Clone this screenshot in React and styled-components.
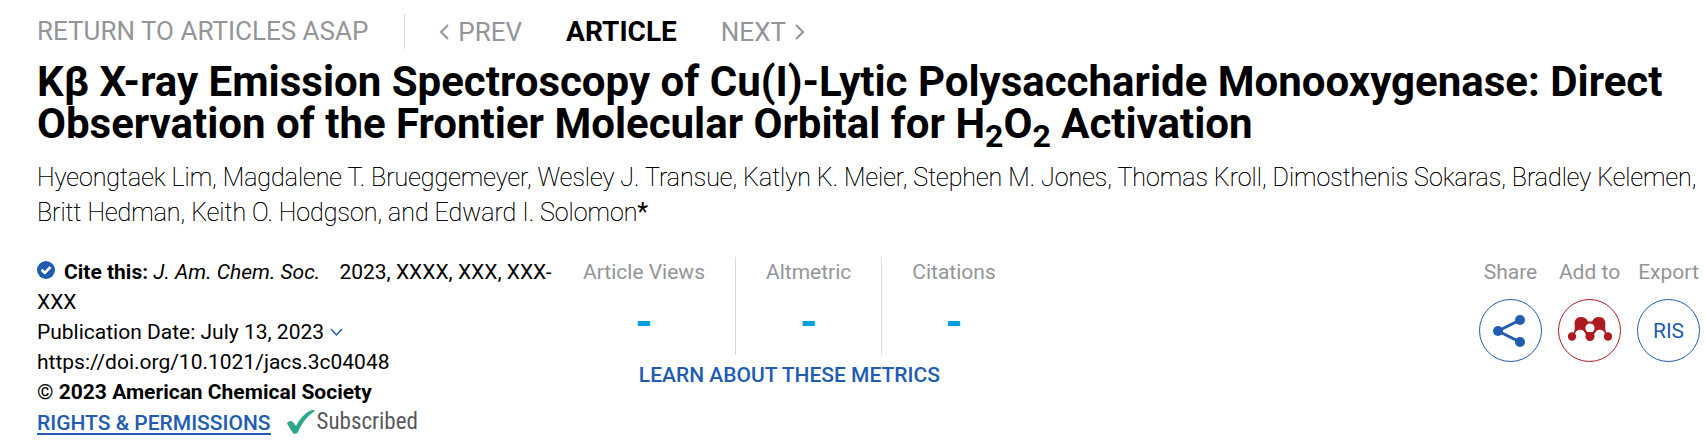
import React from "react";
import styled, { createGlobalStyle } from "styled-components";

const Global = createGlobalStyle`
  *, *::before, *::after { box-sizing: border-box; }
  body {
    margin: 0;
    background: #fff;
    color: #000;
    font-family: Roboto, "Liberation Sans", sans-serif;
    font-size: 21px;
    line-height: 30px;
  }
  a { color: inherit; text-decoration: none; }
  button { font: inherit; cursor: pointer; }
`;

const Page = styled.main`
  padding: 14px 0 9px 37px;
`;

const Nav = styled.nav`
  display: flex;
  align-items: center;
  height: 35px;
  font-size: 26px;
  color: #939598;
`;

const ReturnLink = styled.a`
  padding-right: 36px;
  border-right: 1px solid #d4dee2;
  line-height: 35px;
  margin-right: 34px;
`;

const Pager = styled.div`
  display: flex;
  align-items: center;
  gap: 44px;
`;

const PagerLink = styled.a`
  display: flex;
  align-items: center;
  gap: 9px;
`;

const Current = styled.span`
  font-size: 28px;
  font-weight: 700;
  color: #000;
`;

const Title = styled.h1`
  margin: 12px 0 0;
  font-size: 42px;
  line-height: 42px;
  font-weight: 700;

  sub {
    font-size: 32px;
    line-height: 0;
  }
`;

const Authors = styled.p`
  margin: 15px 0 0;
  font-size: 25px;
  line-height: 35px;
  font-weight: 140;
  text-shadow: 0 0 0 #000;

  span {
    font-weight: 400;
    text-shadow: none;
  }
`;

const Details = styled.div`
  display: flex;
  align-items: flex-start;
  margin-top: 27px;
  padding-right: 5px;
`;

const Citation = styled.section`
  width: 516px;
  flex: none;
`;

const Line = styled.div`
  strong { font-weight: 700; }
  .soc { margin-right: 14px; }
`;

const Badge = styled.svg`
  margin-right: 9px;
  vertical-align: 0;
`;

const DateButton = styled.button`
  display: flex;
  align-items: center;
  gap: 6px;
  padding: 0;
  border: 0;
  background: none;
  color: inherit;
`;

const Access = styled.div`
  display: flex;
  align-items: center;
  gap: 16px;
`;

const Rights = styled.a`
  margin-top: 4px;
  color: #205cb2;
  font-weight: 500;
  line-height: 20px;
  border-bottom: 2px solid #205cb2;
`;

const Subscribed = styled.span`
  display: flex;
  align-items: center;
  gap: 2px;
  color: #58595b;
  font-family: "Roboto Condensed", Roboto, sans-serif;
  font-size: 23px;
`;

const Metrics = styled.section`
  display: flex;
  flex-direction: column;
  align-items: center;
`;

const MetricRow = styled.div`
  display: flex;
`;

const Metric = styled.div`
  height: 98px;
  padding: 0 30px;
  text-align: center;
  color: #939598;

  & + & { border-left: 1px solid #d4dee2; }
`;

const Value = styled.div`
  margin-top: 14px;
  font-size: 44px;
  line-height: 42px;
  font-weight: 700;
  color: #00a0df;
`;

const Learn = styled.a`
  margin-top: 5px;
  color: #205cb2;
  font-weight: 500;
`;

const Actions = styled.section`
  display: flex;
  gap: 16px;
  margin-left: auto;
`;

const Action = styled.label`
  display: flex;
  flex-direction: column;
  align-items: center;
  width: 63px;
  gap: 12px;
  white-space: nowrap;
  color: #939598;
`;

const Round = styled.button`
  display: flex;
  align-items: center;
  justify-content: center;
  width: 63px;
  height: 63px;
  padding: 0;
  border: 1px solid currentColor;
  border-radius: 50%;
  background: #fff;
  color: ${(p) => p.$color || "#205cb2"};
`;

const Chevron = ({ points, width, height, color = "currentColor", weight = 2 }) => (
  <svg width={width} height={height} viewBox={`0 0 ${width} ${height}`} fill="none" stroke={color} strokeWidth={weight} aria-hidden="true">
    <polyline points={points} />
  </svg>
);

const metrics = ["Article Views", "Altmetric", "Citations"];

export default function App() {
  return (
    <>
      <Global />
      <Page>
        <Nav>
          <ReturnLink href="#asap">RETURN TO ARTICLES ASAP</ReturnLink>
          <Pager>
            <PagerLink href="#prev">
              <Chevron width={10} height={16} points="9,1 2,8 9,15" />
              PREV
            </PagerLink>
            <Current>ARTICLE</Current>
            <PagerLink href="#next">
              NEXT
              <Chevron width={10} height={16} points="1,1 8,8 1,15" />
            </PagerLink>
          </Pager>
        </Nav>
        <Title>
          Kβ X-ray Emission Spectroscopy of Cu(I)-Lytic Polysaccharide Monooxygenase: Direct
          Observation of the Frontier Molecular Orbital for H<sub>2</sub>O<sub>2</sub> Activation
        </Title>
        <Authors>
          Hyeongtaek Lim, Magdalene T. Brueggemeyer, Wesley J. Transue, Katlyn K. Meier, Stephen M. Jones,
          Thomas Kroll, Dimosthenis Sokaras, Bradley Kelemen, Britt Hedman, Keith O. Hodgson, and Edward I. Solomon<span>*</span>
        </Authors>
        <Details>
          <Citation>
            <Line>
              <Badge width="18" height="18" viewBox="0 0 18 18" aria-hidden="true">
                <circle cx="9" cy="9" r="9" fill="#205cb2" />
                <path d="M4.500 8.800l3.300 3.200 5.700-6" fill="none" stroke="#fff" strokeWidth="2.600" />
              </Badge>
              <strong>Cite this:</strong>{" "}
              <em className="soc">J. Am. Chem. Soc.</em> 2023, XXXX, XXX, XXX-XXX
            </Line>
            <DateButton type="button">
              Publication Date: July 13, 2023
              <Chevron width={13} height={9} points="1,1 6.500,7 12,1" color="#205cb2" weight={1.5} />
            </DateButton>
            <Line><a href="https://doi.org/10.1021/jacs.3c04048">https://doi.org/10.1021/jacs.3c04048</a></Line>
            <Line>© <strong>2023 American Chemical Society</strong></Line>
            <Access>
              <Rights href="#rights">RIGHTS &amp; PERMISSIONS</Rights>
              <Subscribed>
                <svg width="28" height="24" viewBox="0 0 28 24" aria-hidden="true">
                  <path d="M0 13.500C1 11 4 10 6 12l3 4C13 8 18 3 24 .500c2-.8 3.500-.5 4 .5C20 6 15 13 11 22c-1 2-4 2.500-5.500.5z" fill="#2fa78c" />
                </svg>
                Subscribed
              </Subscribed>
            </Access>
          </Citation>
          <Metrics>
            <MetricRow>
              {metrics.map((name) => (
                <Metric key={name}>
                  {name}
                  <Value>-</Value>
                </Metric>
              ))}
            </MetricRow>
            <Learn href="#metrics">LEARN ABOUT THESE METRICS</Learn>
          </Metrics>
          <Actions>
            <Action>
              Share
              <Round type="button">
                <svg width="36" height="32" viewBox="0 0 36 32" fill="currentColor" aria-hidden="true">
                  <path d="M27 5L5 16l22 11" fill="none" stroke="currentColor" strokeWidth="3" />
                  <circle cx="27" cy="5" r="5" />
                  <circle cx="5" cy="16" r="5" />
                  <circle cx="27" cy="27" r="5" />
                </svg>
              </Round>
            </Action>
            <Action>
              Add to
              <Round type="button" $color="#ae1a20">
                <svg width="44" height="34" viewBox="0 0 44 34" fill="currentColor" aria-hidden="true">
                  <path d="M13 3c3.500 0 6 2 7 4.500h4C25 5 27.500 3 31 3c4.500 0 7 3.500 6.300 8-.3 4 .2 6 1.700 9h-1.800C36 16.500 33 15 30 16c-2 1-3 2.500-4 5h-8c-1-2.500-2-4-4-5-3-1-6 .5-7.200 4H5c1.500-3 2-5 1.700-9C6 6.500 8.500 3 13 3z" />
                  <circle cx="22" cy="14" r="4.600" fill="#fff" />
                  <circle cx="4" cy="22.500" r="4.200" />
                  <circle cx="22" cy="22.500" r="4.500" />
                  <circle cx="40" cy="22.500" r="4.200" />
                </svg>
              </Round>
            </Action>
            <Action>
              Export
              <Round type="button">RIS</Round>
            </Action>
          </Actions>
        </Details>
      </Page>
    </>
  );
}
